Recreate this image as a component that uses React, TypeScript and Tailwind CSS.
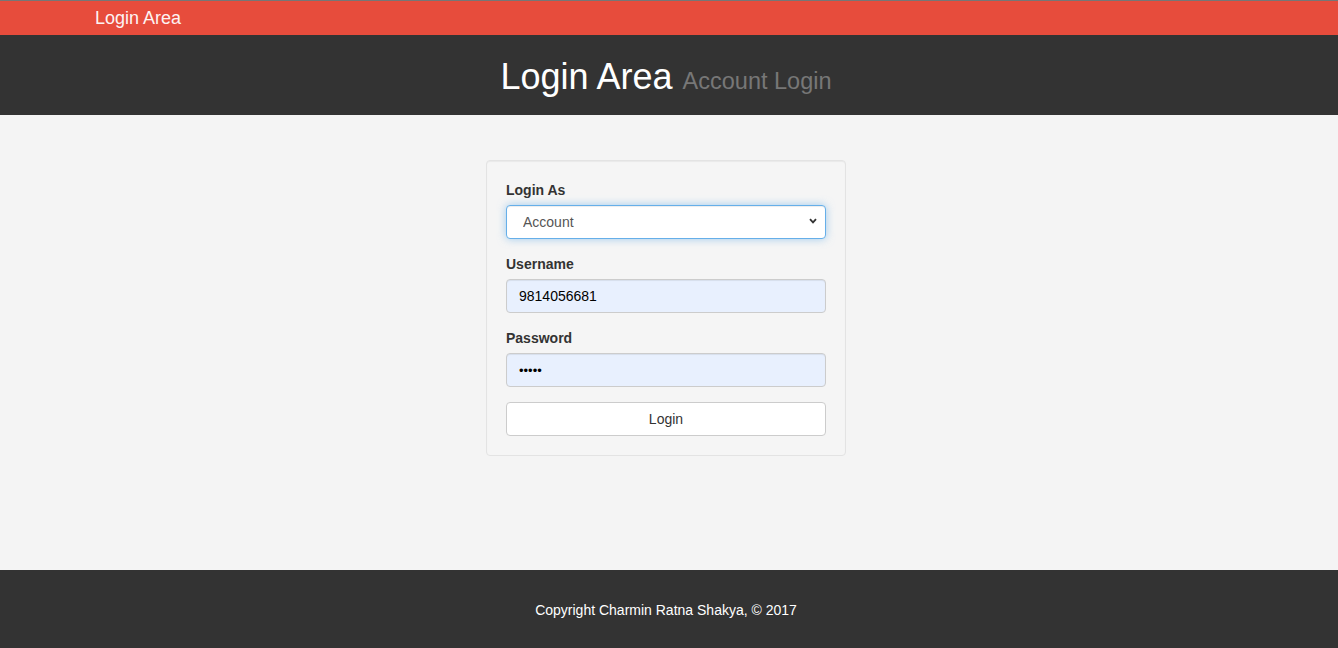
const font = { fontFamily: '"Liberation Sans", Arial, Helvetica, sans-serif' };

function Field({ label, children }: { label: string; children: React.ReactNode }) {
  return (
    <div className="mb-[15px]">
      <label className="mb-[5px] block text-[14px] font-bold leading-[20px] text-[#333]">{label}</label>
      {children}
    </div>
  );
}

export default function App() {
  return (
    <div className="min-h-[648px] bg-[#f4f4f4] text-[14px] text-[#333]" style={font}>
      <nav className="flex h-[35px] items-center border-t border-[#767676] bg-[#e74c3c]">
        <span className="pl-[95px] text-[18px] leading-[20px] text-[#fdf3f3]">Login Area</span>
      </nav>

      <header className="flex h-[80px] items-center justify-center bg-[#333] pt-[3px] pr-[6px]">
        <h1 className="text-[36px] leading-[1.1] text-white">
          Login Area <small className="text-[23.5px] text-[#777]">Account Login</small>
        </h1>
      </header>

      <main className="flex h-[455px] justify-center pt-[45px] pr-[6px]">
        <div className="h-fit w-[360px] rounded-[4px] border border-[#e3e3e3] bg-[#f5f5f5] px-[19px] pt-[19px] pb-[4px] shadow-[inset_0_1px_1px_rgba(0,0,0,0.05)]">
          <form onSubmit={(e) => e.preventDefault()}>
            <Field label="Login As">
              <div className="relative">
                <select
                  defaultValue="account"
                  className="block h-[34px] w-full appearance-none rounded-[4px] border border-[#66afe9] bg-white pl-[16px] pr-[24px] text-[14px] text-[#555] shadow-[inset_0_1px_1px_rgba(0,0,0,0.075),0_0_8px_rgba(102,175,233,0.6)] outline-none"
                >
                  <option value="account">Account</option>
                  <option value="admin">Admin</option>
                </select>
                <svg
                  className="pointer-events-none absolute right-[9px] top-[13px]"
                  width="8"
                  height="6"
                  viewBox="0 0 8 6"
                  fill="none"
                >
                  <path d="M1 1.2 L4 4.4 L7 1.2" stroke="#333" strokeWidth="1.8" />
                </svg>
              </div>
            </Field>
            <Field label="Username">
              <input
                defaultValue="9814056681"
                className="block h-[34px] w-full rounded-[4px] border border-[#ccc] bg-[#e8f0fe] px-[12px] text-[14px] text-black shadow-[inset_0_1px_1px_rgba(0,0,0,0.075)] outline-none"
              />
            </Field>
            <Field label="Password">
              <input
                type="password"
                defaultValue="12345"
                className="block h-[34px] w-full rounded-[4px] border border-[#ccc] bg-[#e8f0fe] px-[12px] text-[13px] text-black shadow-[inset_0_1px_1px_rgba(0,0,0,0.075)] outline-none"
              />
            </Field>
            <button
              type="submit"
              className="mb-[15px] block h-[34px] w-full rounded-[4px] border border-[#ccc] bg-white text-[14px] text-[#333]"
            >
              Login
            </button>
          </form>
        </div>
      </main>

      <footer className="flex h-[78px] items-center justify-center bg-[#333] pt-[2px] pr-[6px] text-[14px] text-white">
        Copyright Charmin Ratna Shakya, &copy; 2017
      </footer>
    </div>
  );
}
